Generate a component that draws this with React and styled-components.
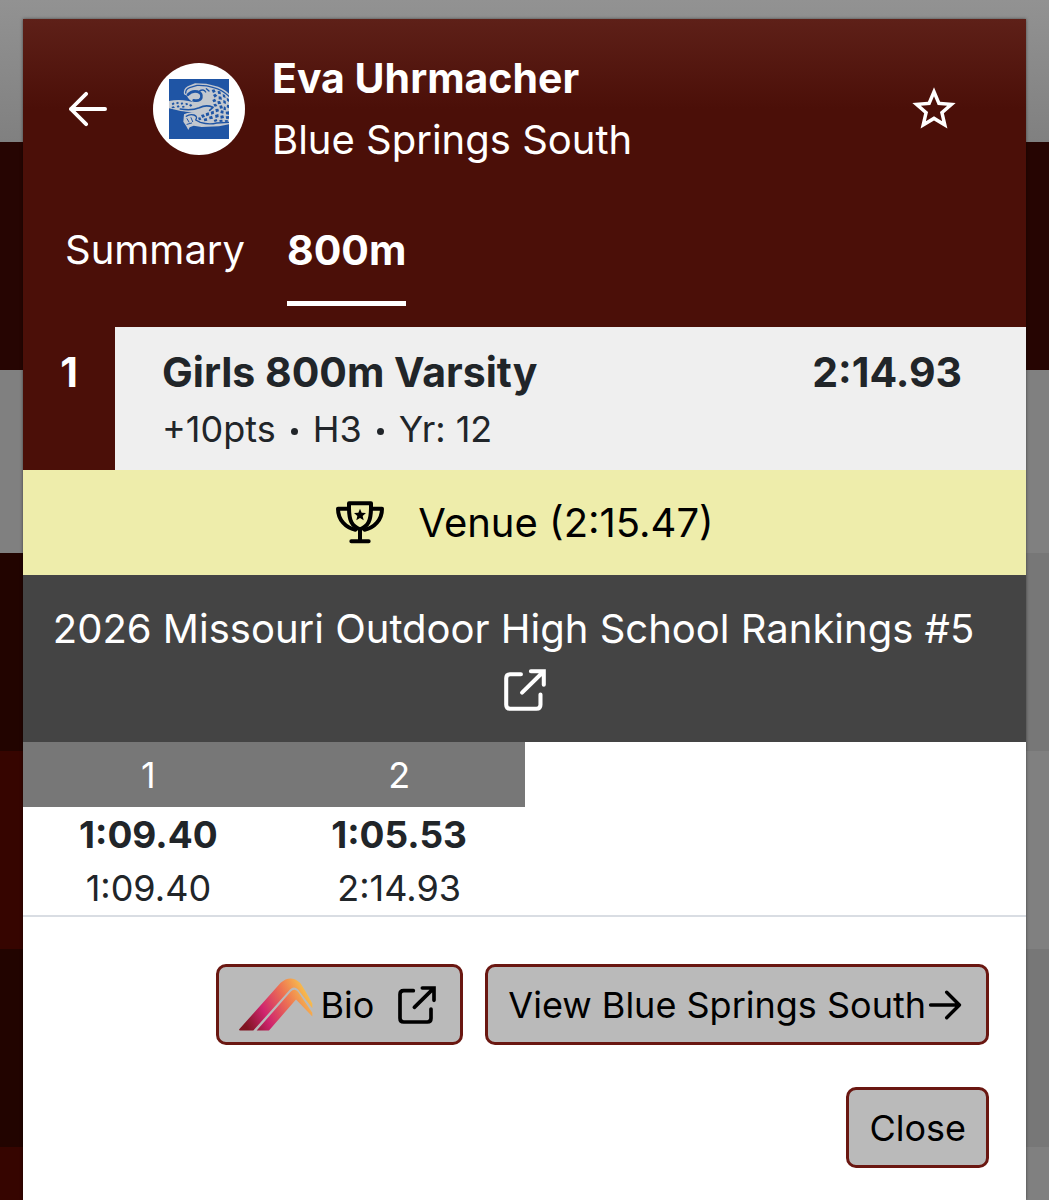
import styled, { createGlobalStyle } from 'styled-components';
import { MdStarBorder } from 'react-icons/md';

const splits = [
    { lap: '1', split: '1:09.40', total: '1:09.40' },
    { lap: '2', split: '1:05.53', total: '2:14.93' },
];

const GlobalStyle = createGlobalStyle`
    * { box-sizing: border-box; }
    body {
        margin: 0;
        background: #808080;
        color: #212529;
        font-family: Inter, "Liberation Sans", sans-serif;
    }
    button { font-family: inherit; cursor: pointer; }
    svg { display: block; flex-shrink: 0; }
`;

const Page = styled.div`
    display: grid;
    min-height: 100vh;
    overflow: hidden;
`;

/* dimmed results page that shows around the dialog */
const Backdrop = styled.div`
    grid-area: 1 / 1;
    display: flex;
    flex-direction: column;
`;

const BackdropBand = styled.div`
    height: ${({ $height }) => $height}px;
    background: ${({ $fill }) => $fill};
`;

const BackdropRow = styled.div`
    height: 198px;
    border-left: 60px solid ${({ $odd }) => ($odd ? '#220400' : '#360500')};
    background: ${({ $odd }) => ($odd ? '#777777' : '#808080')};
    &:last-child { height: auto; flex: 1; }
`;

const Dialog = styled.main`
    grid-area: 1 / 1;
    margin: 19px 23px 0;
    background: #ffffff;
    box-shadow: 0 0 3px rgba(0, 0, 0, 0.5);
`;

const Header = styled.header`
    padding: 28px 62px 21px 42px;
    color: #ffffff;
    background: linear-gradient(#5e2018, #4b0f08 90px);
`;

const Athlete = styled.div`
    display: flex;
    align-items: center;
`;

const IconButton = styled.button`
    display: flex;
    padding: 4px;
    border: 0;
    background: none;
    color: inherit;
`;

const Avatar = styled.div`
    display: grid;
    place-items: center;
    width: 92px;
    height: 92px;
    margin: 0 27px 0 42px;
    border-radius: 50%;
    background: #ffffff;
`;

const AthleteText = styled.div`
    flex: 1;
    font-size: 40px;
    line-height: 62px;
`;

const Name = styled.h1`
    margin: 0;
    font-size: 41px;
    font-weight: 700;
    line-height: 62px;
`;

const Tabs = styled.nav`
    display: flex;
    gap: 42px;
    margin-top: 48px;
`;

const Tab = styled.button`
    padding: 0 0 20px;
    border: 0;
    border-bottom: 5px solid ${({ $active }) => ($active ? '#ffffff' : 'transparent')};
    background: none;
    color: inherit;
    font-size: ${({ $active }) => ($active ? 41 : 40)}px;
    font-weight: ${({ $active }) => ($active ? 700 : 400)};
    line-height: 62px;
`;

const Result = styled.section`
    display: flex;
    background: #efefef;
`;

const Place = styled.div`
    width: 92px;
    padding-top: 17px;
    background: #4b0f08;
    color: #ffffff;
    font-size: 41px;
    font-weight: 700;
    line-height: 57px;
    text-align: center;
`;

const ResultBody = styled.div`
    flex: 1;
    padding: 17px 64px 12px 47px;
`;

const ResultTitle = styled.div`
    display: flex;
    justify-content: space-between;
    font-size: 41px;
    font-weight: 700;
    line-height: 57px;
`;

const ResultMeta = styled.div`
    display: flex;
    align-items: center;
    gap: 15px;
    font-size: 36px;
    line-height: 57px;
`;

const Dot = styled.i`
    width: 7px;
    height: 7px;
    margin-top: 4px;
    border-radius: 50%;
    background: currentColor;
`;

const Venue = styled.section`
    display: flex;
    align-items: center;
    justify-content: center;
    gap: 33px;
    height: 105px;
    background: #eeedab;
    color: #000000;
    font-size: 40px;
`;

const Rankings = styled.a`
    display: flex;
    flex-direction: column;
    align-items: center;
    gap: 9px;
    padding: 23px 20px 31px;
    background: #444444;
    color: #ffffff;
    font-size: 40px;
    line-height: 62px;
    text-align: center;
    text-decoration: none;
`;

const RankingsText = styled.span`
    padding-right: 22px;
`;

const SplitSection = styled.section`
    border-bottom: 2px solid #d9dde3;
`;

const Splits = styled.table`
    width: 50%;
    table-layout: fixed;
    border-collapse: collapse;
    font-size: 36px;
    text-align: center;
    th, td { padding: 0; }
    th {
        height: 65px;
        background: #777777;
        color: #ffffff;
        font-weight: 400;
    }
    td { height: 54px; }
`;

const SplitTime = styled.td`
    font-size: 37px;
    font-weight: 700;
`;

const Footer = styled.footer`
    display: flex;
    flex-wrap: wrap;
    justify-content: flex-end;
    gap: 42px 22px;
    padding: 47px 37px 32px 60px;
`;

const FooterButton = styled.button`
    display: flex;
    align-items: center;
    height: 81px;
    padding: 0 ${({ $icon }) => ($icon ? 24 : 20)}px 0 20px;
    border: 3px solid #6a1711;
    border-radius: 10px;
    background: #bababa;
    color: #000000;
    font-size: 36px;
`;

const BioLabel = styled.span`
    padding: 0 24px 0 8px;
`;

const ViewLabel = styled.span`
    padding-right: 2px;
`;

const ArrowIcon = ({ size, flip }) => (
    <svg width={size} height={size} viewBox="0 0 40 40" fill="none" stroke="currentColor" strokeWidth="4" strokeLinecap="round" strokeLinejoin="round">
        <path d={flip ? 'M3 20H37M22 5L37 20L22 35' : 'M38 20H2M18 4L2 20L18 36'} />
    </svg>
);

const ExternalIcon = ({ size }) => (
    <svg width={size} height={size} viewBox="594 130 114 114" fill="none" stroke="currentColor" strokeWidth="11" strokeLinecap="round">
        <path d="M640 144H611Q600 144 600 155V227Q600 238 611 238H682Q693 238 693 227V199" />
        <path d="M667 136H702V173M643 194L700 138" />
    </svg>
);

const TrophyIcon = () => (
    <svg width="50" height="45" viewBox="45 60 150 135" fill="none" stroke="currentColor" strokeWidth="12" strokeLinecap="round" strokeLinejoin="round">
        <path d="M87 70H153V82C153 122 145 139 120 148C95 139 87 122 87 82Z" />
        <path d="M84 86H54C54 120 78 144 106 149M156 86H186C186 120 162 144 134 149" />
        <path d="M120 150V184M94 184H146" />
        <path d="M120 86L125 98L138 99L128 108L131 121L120 114L109 121L112 108L102 99L115 98Z" fill="currentColor" stroke="none" />
    </svg>
);

const JaguarLogo = () => (
    <svg width="60" height="60" viewBox="0 0 180 180" role="img" aria-label="Blue Springs South">
        <rect width="180" height="180" fill="#1f55a5" />
        {/* head, back and arm */}
        <path d="M0 66Q28 60 58 66L74 70Q58 62 54 50L45 46Q42 30 56 22L78 13L112 14L136 20Q160 24 180 44V136L150 142L98 144L74 140L62 145L58 153L52 142L43 128L45 106Q58 98 78 101L38 97L0 88Z" fill="#c3c8cf" />
        {/* inner contour lines */}
        <g fill="none" stroke="#1f55a5" strokeLinecap="round" strokeLinejoin="round">
            <path d="M50 42Q50 30 62 26L84 19Q112 18 134 26Q158 32 180 52" strokeWidth="4" />
            <path d="M57 47Q68 34 86 38Q100 42 97 56Q92 68 74 64" strokeWidth="8" />
            <path d="M90 37Q104 28 110 39M112 29L120 36" strokeWidth="4" />
            <path d="M34 90Q68 96 91 86Q112 76 132 85L122 94" strokeWidth="5" />
            <path d="M52 112Q62 104 75 108Q87 112 80 123L94 130Q120 138 143 132L180 130" strokeWidth="4" />
            <path d="M54 119L60 129M66 116L71 128M54 136L68 132" strokeWidth="3" />
            <path d="M0 92Q28 100 46 100" strokeWidth="3" />
        </g>
        {/* spots */}
        <g fill="#1f55a5">
            <path d="M8 74l5-4 4 5-6 4zM21 71l6-3 3 5-6 3zM23 81l6-2 3 5-6 2zM35 72l5-2 3 5-6 2zM39 82l5-2 4 4-7 3zM49 73l6-1 2 5-6 2zM7 84l7-2 4 4-8 2zM60 78l6-3 4 5-6 3z" />
            <path d="M128 33l8-2 4 7-8 4zM146 36l8 1 2 9-9-2zM161 45l7 3 2 9-8-3zM173 56l7 4v9l-6-4zM132 48l7-4 6 6-8 6zM149 52l8 1 2 9-10-1zM130 63l8-4 4 8-9 3zM145 67l8-1 4 8-10 2zM163 63l7 3 1 9-8-3zM174 77l6 1v10l-7-3zM133 76l8-2 4 7-8 2zM151 80l8-1 3 9-9 1zM165 82l5 3 1 9-8-2zM139 90l9-1 2 8-9 3zM156 94l8 1-1 9-9-2zM170 98l10-1v10l-9-1z" />
            <path d="M125 98l9-3 1 9-8 3zM110 103l9-3 2 9-9 3zM96 108l8-2 4 7-8 4zM87 116l7-1 3 7-7 2zM104 119l9-2 2 8-9 2zM120 113l9-3 3 9-10 2zM138 108l10-3 1 9-9 3zM154 110l9-1 2 8-10 2zM170 112l10-1v8l-8 1zM134 123l9-3 2 6-8 3zM151 123l9-1 1 6-9 1zM167 124l9-1 1 5-8 1z" />
        </g>
    </svg>
);

const BioLogo = () => (
    <svg width="74" height="53" viewBox="115 118 222 158">
        <defs>
            <linearGradient id="bio" gradientUnits="userSpaceOnUse" x1="130" y1="275" x2="330" y2="170">
                <stop offset="0.05" stopColor="#7e1420" />
                <stop offset="0.35" stopColor="#cf246e" />
                <stop offset="0.7" stopColor="#ee7552" />
                <stop offset="1" stopColor="#f8c44c" />
            </linearGradient>
        </defs>
        <path d="M115 272L240 132Q270 106 298 132Q306 142 335 194V208L292 152Q280 140 268 152L158 275H117Z" fill="url(#bio)" />
        <path d="M168 275L270 159Q281 147 292 159L335 222V233L286 182L205 275Z" fill="url(#bio)" />
    </svg>
);

const App = () => {
    return (
        <>
            <GlobalStyle />
            <Page>
                <Backdrop aria-hidden="true">
                    <BackdropBand $height={142} $fill="linear-gradient(#929292, #808080)" />
                    <BackdropBand $height={228} $fill="#260502" />
                    <BackdropBand $height={183} $fill="#808080" />
                    <BackdropRow $odd />
                    <BackdropRow />
                    <BackdropRow $odd />
                    <BackdropRow />
                </Backdrop>
                <Dialog>
                    <Header>
                        <Athlete>
                            <IconButton aria-label="Back"><ArrowIcon size={38} /></IconButton>
                            <Avatar><JaguarLogo /></Avatar>
                            <AthleteText>
                                <Name>Eva Uhrmacher</Name>
                                <div>Blue Springs South</div>
                            </AthleteText>
                            <IconButton aria-label="Favorite"><MdStarBorder size={52} /></IconButton>
                        </Athlete>
                        <Tabs>
                            <Tab>Summary</Tab>
                            <Tab $active>800m</Tab>
                        </Tabs>
                    </Header>
                    <Result>
                        <Place>1</Place>
                        <ResultBody>
                            <ResultTitle>
                                <span>Girls 800m Varsity</span>
                                <span>2:14.93</span>
                            </ResultTitle>
                            <ResultMeta>
                                <span>+10pts</span>
                                <Dot />
                                <span>H3</span>
                                <Dot />
                                <span>Yr: 12</span>
                            </ResultMeta>
                        </ResultBody>
                    </Result>
                    <Venue>
                        <TrophyIcon />
                        <span>Venue (2:15.47)</span>
                    </Venue>
                    <Rankings href="#rankings">
                        <RankingsText>2026 Missouri Outdoor High School Rankings #5</RankingsText>
                        <ExternalIcon size={42} />
                    </Rankings>
                    <SplitSection>
                        <Splits>
                            <thead>
                                <tr>{splits.map((s) => <th key={s.lap}>{s.lap}</th>)}</tr>
                            </thead>
                            <tbody>
                                <tr>{splits.map((s) => <SplitTime key={s.lap}>{s.split}</SplitTime>)}</tr>
                                <tr>{splits.map((s) => <td key={s.lap}>{s.total}</td>)}</tr>
                            </tbody>
                        </Splits>
                    </SplitSection>
                    <Footer>
                        <FooterButton $icon>
                            <BioLogo />
                            <BioLabel>Bio</BioLabel>
                            <ExternalIcon size={38} />
                        </FooterButton>
                        <FooterButton $icon>
                            <ViewLabel>View Blue Springs South</ViewLabel>
                            <ArrowIcon size={34} flip />
                        </FooterButton>
                        <FooterButton>Close</FooterButton>
                    </Footer>
                </Dialog>
            </Page>
        </>
    );
}

export default App;
